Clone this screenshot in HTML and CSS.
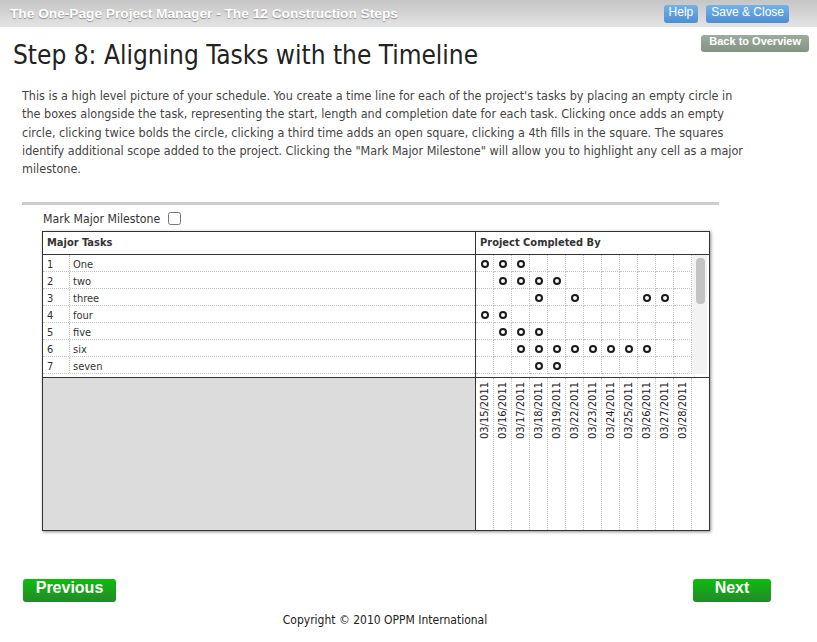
FILE: index.html
```html
<!DOCTYPE html>
<html lang="en">
<head>
  <meta charset="UTF-8" />
  <title>Step 8 - The One-Page Project Manager</title>
  <link rel="stylesheet" href="styles.css">
</head>
<body>

<header class="topbar">
  <span class="app-title">The One-Page Project Manager - The 12 Construction Steps</span>
  <div class="top-actions">
    <a href="#" class="btn-blue">Help</a>
    <a href="#" class="btn-blue">Save &amp; Close</a>
  </div>
</header>

<div class="page-head">
  <h1>Step 8: Aligning Tasks with the Timeline</h1>
  <a href="#" class="btn-gray">Back to Overview</a>
</div>

<p class="intro">This is a high level picture of your schedule. You create a time line for each of the project's tasks by placing an empty circle in the boxes alongside the task, representing the start, length and completion date for each task. Clicking once adds an empty circle, clicking twice bolds the circle, clicking a third time adds an open square, clicking a 4th fills in the square. The squares identify additional scope added to the project. Clicking the "Mark Major Milestone" will allow you to highlight any cell as a major milestone.</p>

<div class="board">
  <label class="milestone">Mark Major Milestone <input type="checkbox" /></label>

  <div class="schedule">
    <div class="tasks">
      <div class="col-head">Major Tasks</div>
      <div class="task-rows">
        <div class="task"><span class="num">1</span><span class="name">One</span></div>
        <div class="task"><span class="num">2</span><span class="name">two</span></div>
        <div class="task"><span class="num">3</span><span class="name">three</span></div>
        <div class="task"><span class="num">4</span><span class="name">four</span></div>
        <div class="task"><span class="num">5</span><span class="name">five</span></div>
        <div class="task"><span class="num">6</span><span class="name">six</span></div>
        <div class="task"><span class="num">7</span><span class="name">seven</span></div>
      </div>
      <div class="tasks-foot"></div>
    </div>

    <div class="timeline">
      <div class="col-head">Project Completed By</div>
      <div class="time-body">
        <div class="time-grid" id="timeGrid"></div>
        <div class="scroll"><div class="thumb"></div></div>
      </div>
      <div class="dates" id="dates"></div>
    </div>
  </div>
</div>

<div class="pager">
  <a href="#" class="btn-green prev">Previous</a>
  <a href="#" class="btn-green next">Next</a>
</div>

<footer>Copyright &copy; 2010 OPPM International</footer>

<script>
  const marks = [
    [0, 1, 2],
    [1, 2, 3, 4],
    [3, 5, 9, 10],
    [0, 1],
    [1, 2, 3],
    [2, 3, 4, 5, 6, 7, 8, 9],
    [3, 4]
  ];
  const dates = ["03/15/2011", "03/16/2011", "03/17/2011", "03/18/2011", "03/19/2011", "03/22/2011",
                 "03/23/2011", "03/24/2011", "03/25/2011", "03/26/2011", "03/27/2011", "03/28/2011"];

  const grid = document.getElementById("timeGrid");
  marks.forEach(row => {
    for (let c = 0; c < 12; c++) {
      const cell = document.createElement("div");
      cell.className = "cell";
      if (row.includes(c)) cell.innerHTML = '<span class="dot"></span>';
      grid.appendChild(cell);
    }
  });

  const dateRow = document.getElementById("dates");
  dates.forEach(d => {
    const cell = document.createElement("div");
    cell.className = "date";
    cell.innerHTML = `<span>${d}</span>`;
    dateRow.appendChild(cell);
  });
</script>

</body>
</html>
```

FILE: styles.css
```css
* { box-sizing: border-box; }
body {
  margin: 0;
  font-family: "DejaVu Sans Condensed", "DejaVu Sans", sans-serif;
  color: #333;
  background: #fff;
}
a { text-decoration: none; }

.topbar {
  height: 27px;
  background: linear-gradient(#c5c5c5, #e4e4e4);
  display: flex;
  align-items: center;
  justify-content: space-between;
  padding: 0 28px 0 10px;
}
.app-title {
  font: bold 13.7px "Liberation Sans", Arial, sans-serif;
  color: #fff;
  text-shadow: 0 1px 1px rgba(0,0,0,0.35);
}
.top-actions {
  display: flex;
  gap: 8px;
}
.btn-blue {
  display: block;
  height: 18px;
  line-height: 18px;
  padding: 0 5px;
  font: 12px "Liberation Sans", Arial, sans-serif;
  color: #fff;
  background: linear-gradient(#72b2ea, #4e8ed0);
  border-radius: 3px;
}

.page-head {
  display: flex;
  justify-content: space-between;
  align-items: flex-start;
  padding: 8px 8px 0 13px;
}
h1 {
  margin: 4px 0 0;
  font-size: 26px;
  line-height: 32px;
  font-weight: normal;
  color: #222;
}
.btn-gray {
  display: block;
  height: 17px;
  line-height: 17px;
  padding: 0 8px;
  font: bold 11px "Liberation Sans", Arial, sans-serif;
  color: #fff;
  background: linear-gradient(#9dad9d, #839383);
  border-radius: 3px;
}

.intro {
  margin: 16px 0 0 22px;
  width: 726px;
  font-size: 12.5px;
  line-height: 18.3px;
  color: #444;
}

.board {
  margin: 24px 0 0 22px;
  width: 697px;
  border-top: 3px solid #ccc;
  padding-left: 20px;
}
.milestone {
  display: flex;
  align-items: center;
  gap: 8px;
  height: 17px;
  margin: 5px 0 0 1px;
  font-size: 12.2px;
  color: #333;
}
.milestone input { margin: 0; }

.schedule {
  display: flex;
  width: 668px;
  height: 300px;
  margin-top: 4px;
  border: 1px solid #333;
  box-shadow: 1px 1px 3px rgba(0,0,0,0.45);
  font-size: 11px;
}
.tasks {
  width: 433px;
  border-right: 1px solid #333;
  display: flex;
  flex-direction: column;
}
.timeline {
  flex: 1;
  display: flex;
  flex-direction: column;
}
.col-head {
  height: 23px;
  line-height: 22px;
  padding-left: 4px;
  border-bottom: 1px solid #333;
  font-weight: bold;
  color: #333;
}
.task-rows {
  height: 123px;
  border-bottom: 1px solid #333;
}
.task {
  display: flex;
  height: 17px;
  padding-top: 2px;
  line-height: 15px;
  border-bottom: 1px dotted #c4c4c4;
}
.num {
  width: 27px;
  margin-top: -2px;
  padding: 2px 0 0 4px;
  border-right: 1px dotted #c4c4c4;
}
.name { padding-left: 3px; }
.tasks-foot {
  flex: 1;
  background: #dcdcdc;
}

.time-body {
  display: flex;
  height: 123px;
  border-bottom: 1px solid #333;
}
.time-grid {
  display: grid;
  grid-template-columns: repeat(12, 18px);
  grid-auto-rows: 17px;
  align-content: start;
}
.cell {
  border-right: 1px dotted #c4c4c4;
  border-bottom: 1px dotted #c4c4c4;
}
.dot {
  display: block;
  width: 8px;
  height: 8px;
  margin: 5px auto 0;
  border: 2px solid #1a1a1a;
  border-radius: 50%;
  background: radial-gradient(circle at 40% 35%, #fff 50%, #e6e6e6);
}
.scroll {
  width: 15px;
  margin: 0 2px 3px 0;
  background: #f3f3f3;
  padding: 3px 2px 0 4px;
}
.thumb {
  height: 46px;
  background: #c3c3c3;
  border-radius: 4px;
}

.dates {
  flex: 1;
  display: grid;
  grid-template-columns: repeat(12, 18px);
}
.date {
  border-right: 1px dotted #c4c4c4;
  text-align: center;
  padding-top: 4px;
}
.date span {
  display: inline-block;
  writing-mode: vertical-rl;
  transform: rotate(180deg);
  font-size: 11px;
  line-height: 17px;
  color: #222;
}

.pager {
  display: flex;
  justify-content: space-between;
  margin: 48px 46px 0 23px;
}
.btn-green {
  display: block;
  height: 23px;
  line-height: 23px;
  text-align: center;
  font: bold 16px "Liberation Sans", Arial, sans-serif;
  color: #fff;
  background: linear-gradient(#0cbd0c, #23892a);
  border-radius: 3px;
}
.prev { width: 93px; }
.next { width: 78px; }

footer {
  margin-top: 11px;
  padding-right: 47px;
  text-align: center;
  font-size: 12px;
  color: #222;
}
```
